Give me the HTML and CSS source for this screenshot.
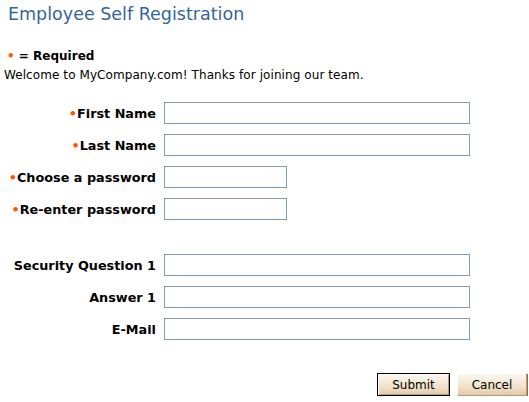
FILE: index.html
```html
<!DOCTYPE html>
<html lang="en">
<head>
    <meta charset="UTF-8">
    <title>Employee Self Registration</title>
    <link rel="stylesheet" href="styles.css">
</head>
<body>

<h1>Employee Self Registration</h1>

<p class="legend"><span class="req">&bull;</span> = Required</p>
<p class="welcome">Welcome to MyCompany.com! Thanks for joining our team.</p>

<!-- Registration form -->
<form class="regForm">
    <div class="fields">
        <label><span class="req">&bull;</span>First Name</label>
        <input type="text" class="wide">

        <label><span class="req">&bull;</span>Last Name</label>
        <input type="text" class="wide">

        <label><span class="req">&bull;</span>Choose a password</label>
        <input type="password" class="short">

        <label><span class="req">&bull;</span>Re-enter password</label>
        <input type="password" class="short">

        <div class="spacer"></div>

        <label>Security Question 1</label>
        <input type="text" class="wide">

        <label>Answer 1</label>
        <input type="text" class="wide">

        <label>E-Mail</label>
        <input type="text" class="wide">
    </div>

    <div class="buttons">
        <button type="button" class="btn default">Submit</button>
        <button type="button" class="btn">Cancel</button>
    </div>
</form>

</body>
</html>
```

FILE: styles.css
```css
body {
    font-family: "DejaVu Sans", Verdana, sans-serif;
    font-size: 12px;
    background-color: #fff;
    color: #000;
    margin: 0;
}

h1 {
    font-size: 17.5px;
    font-weight: normal;
    color: #336699;
    margin: 0;
    padding: 4px 0 0 8px;
    height: 38px;
}

.req {
    color: #ff5500;
    font-weight: bold;
}

.legend {
    margin: 6px 0 0 0;
    padding-left: 7px;
    font-weight: bold;
    font-size: 12px;
    line-height: 16px;
}

.welcome {
    margin: 3px 0 0 4px;
    line-height: 16px;
    letter-spacing: 0.08px;
}

.fields {
    display: grid;
    grid-template-columns: 156px auto;
    column-gap: 8px;
    row-gap: 10px;
    margin-top: 19px;
}

.fields label {
    font-weight: bold;
    font-size: 12.8px;
    text-align: right;
    align-self: center;
    white-space: nowrap;
}

.fields input {
    box-sizing: border-box;
    height: 22px;
    border: 1px solid #7f9db9;
    margin: 0;
    padding: 2px;
    font-family: inherit;
}

.fields .wide {
    width: 306px;
}

.fields .short {
    width: 123px;
}

.spacer {
    grid-column: 1 / 3;
    height: 14px;
}

.buttons {
    display: flex;
    justify-content: flex-end;
    gap: 7px;
    padding-right: 2px;
    margin-top: 33px;
}

.btn {
    box-sizing: border-box;
    height: 23px;
    width: 70px;
    font-family: "DejaVu Sans", Verdana, sans-serif;
    font-size: 12px;
    color: #000;
    background: linear-gradient(#fbf7f0, #f0e2cc 60%, #e3caa8);
    border: 1px solid;
    border-color: #fff #b89a74 #b89a74 #fff;
    box-shadow: 1px 1px 0 #8c7050;
    padding: 0;
}

.btn.default {
    width: 73px;
    border: 1px solid #000;
    box-shadow: inset 1px 1px 0 #fff, inset -1px -1px 0 #b89a74;
}
```
